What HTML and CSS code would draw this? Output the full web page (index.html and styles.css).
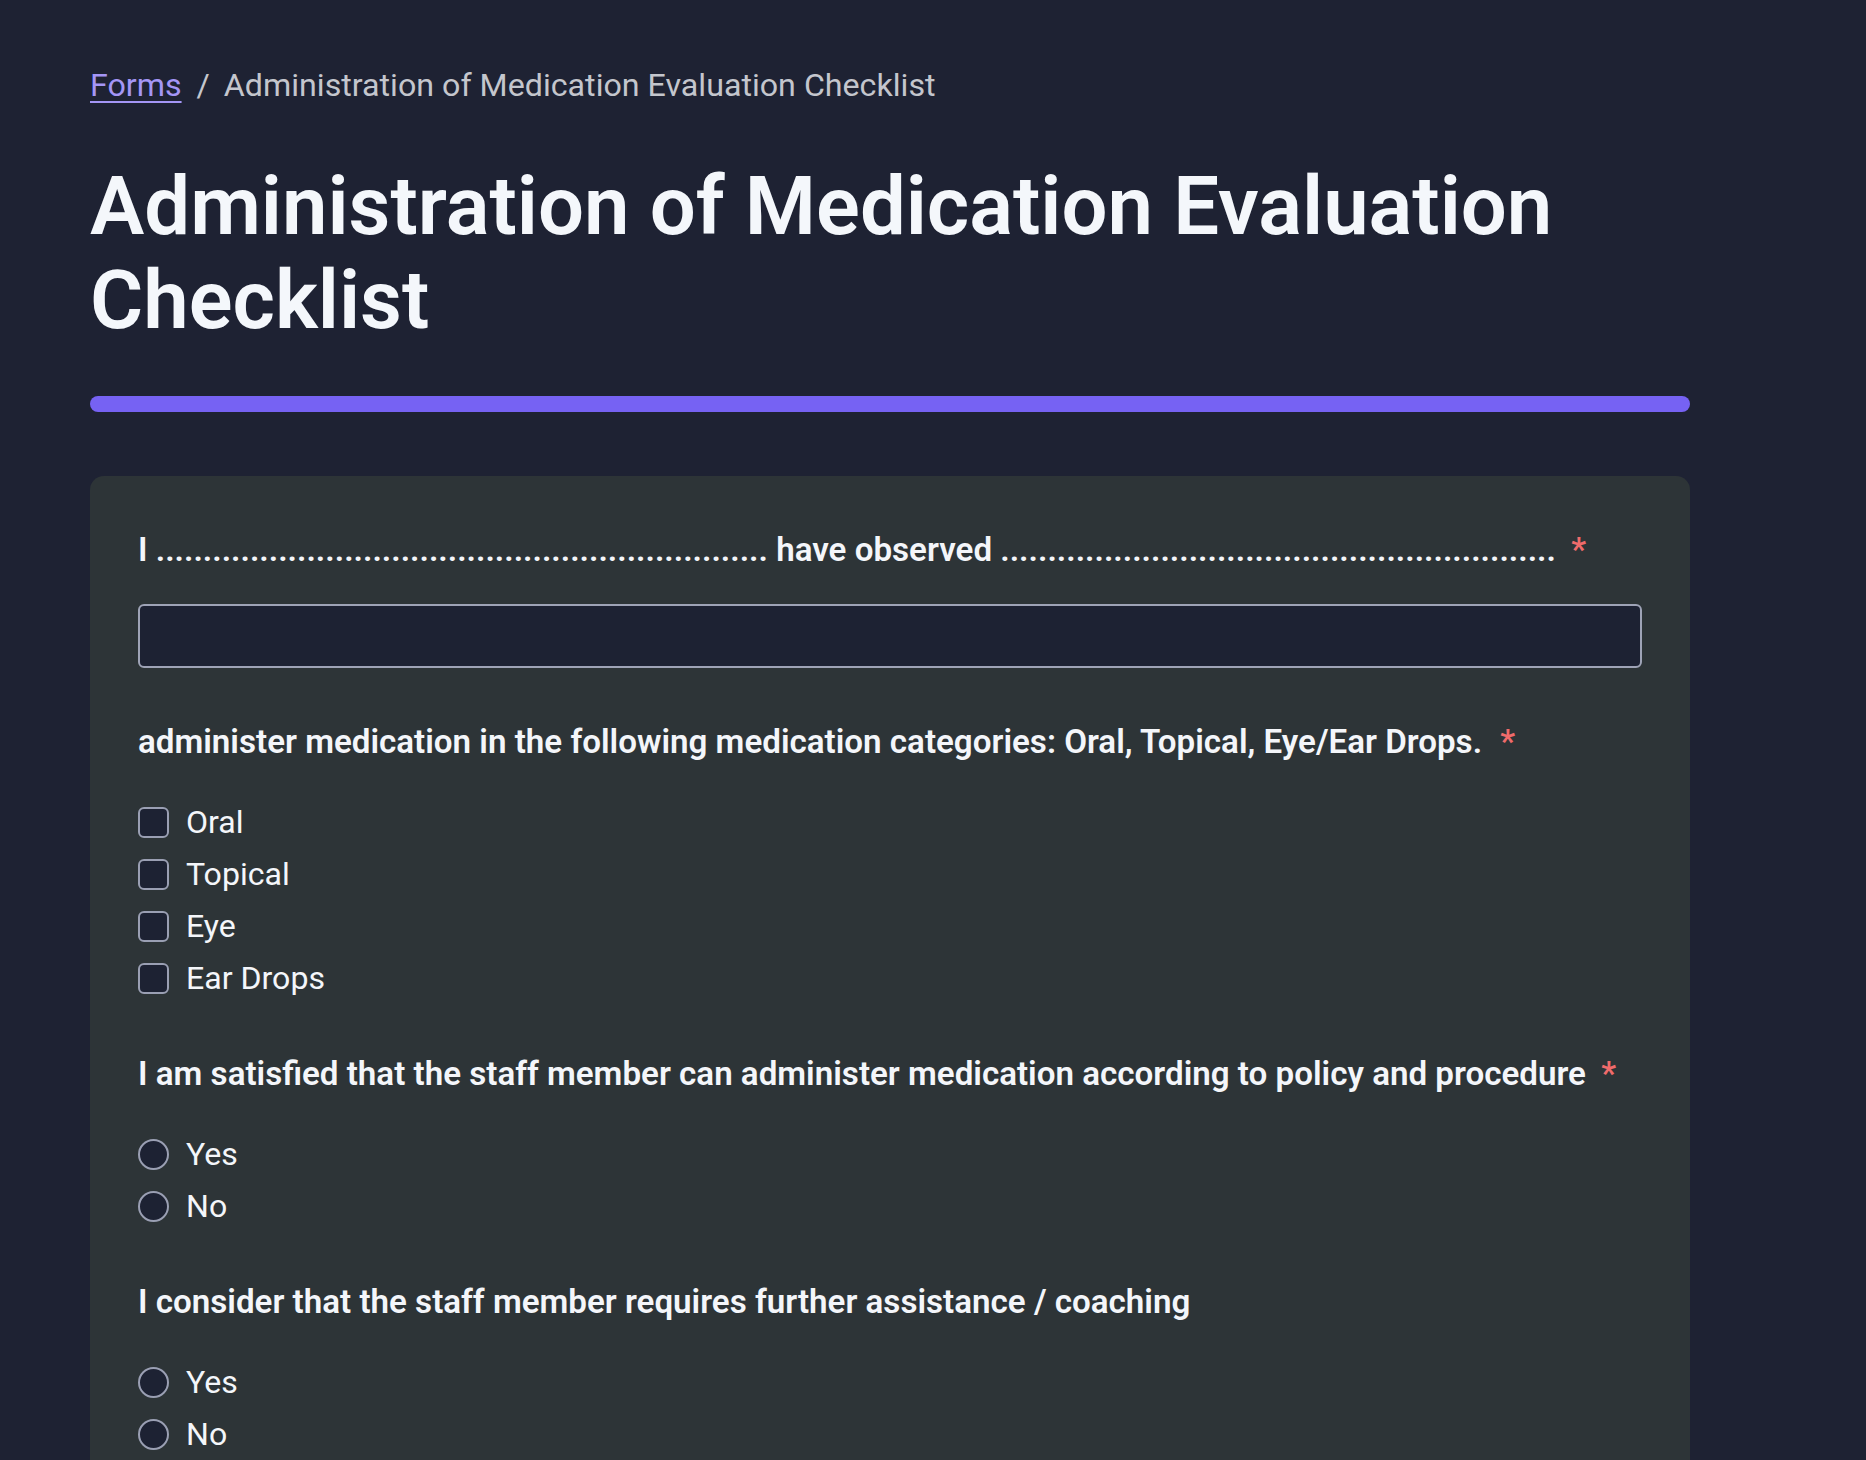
FILE: index.html
```html
<!DOCTYPE html>
<html lang="en">
<head>
<meta charset="utf-8">
<title>Administration of Medication Evaluation Checklist</title>
<link rel="stylesheet" href="styles.css">
</head>
<body>
<main class="page">
  <nav class="breadcrumb"><a href="#" class="crumb-link">Forms</a><span class="crumb-sep">/</span><span class="crumb-current">Administration of Medication Evaluation Checklist</span></nav>
  <h1 class="title">Administration of Medication Evaluation Checklist</h1>
  <div class="progress"></div>
  <form class="card">
    <div class="field">
      <label class="label">I ................................................................. have observed ........................................................... <span class="req">*</span></label>
      <input class="text-input" type="text">
    </div>
    <div class="field">
      <div class="label">administer medication in the following medication categories: Oral, Topical, Eye/Ear Drops. <span class="req req-wide">*</span></div>
      <div class="options">
        <label class="option"><input type="checkbox" class="check"><span>Oral</span></label>
        <label class="option"><input type="checkbox" class="check"><span>Topical</span></label>
        <label class="option"><input type="checkbox" class="check"><span>Eye</span></label>
        <label class="option"><input type="checkbox" class="check"><span>Ear Drops</span></label>
      </div>
    </div>
    <div class="field">
      <div class="label">I am satisfied that the staff member can administer medication according to policy and procedure <span class="req">*</span></div>
      <div class="options">
        <label class="option"><input type="radio" name="q3" class="radio"><span>Yes</span></label>
        <label class="option"><input type="radio" name="q3" class="radio"><span>No</span></label>
      </div>
    </div>
    <div class="field">
      <div class="label">I consider that the staff member requires further assistance / coaching</div>
      <div class="options">
        <label class="option"><input type="radio" name="q4" class="radio"><span>Yes</span></label>
        <label class="option"><input type="radio" name="q4" class="radio"><span>No</span></label>
      </div>
    </div>
  </form>
</main>
</body>
</html>
```
FILE: styles.css
```css
html, body {
  margin: 0;
  padding: 0;
  background: #1e2233;
}
body {
  font-family: Roboto, "Liberation Sans", sans-serif;
  color: #f4f6fa;
}
.page {
  padding: 61px 0 60px 90px;
  width: 1600px;
}
.breadcrumb {
  font-size: 32.2px;
  line-height: 48px;
  color: #c4c6cd;
  display: flex;
  white-space: nowrap;
}
.crumb-link {
  color: #a496f6;
  text-decoration: underline;
  text-underline-offset: 5px;
  text-decoration-thickness: 2px;
}
.crumb-sep {
  margin: 0 14px 0 15px;
}
.title {
  margin: 50px 0 0;
  font-size: 81.4px;
  line-height: 94px;
  font-weight: 600;
  color: #f4f7fb;
}
.progress {
  margin-top: 49px;
  height: 16px;
  border-radius: 8px;
  background: #7662f3;
}
.card {
  margin-top: 64px;
  background: #2d3437;
  border-radius: 14px;
  padding: 50px 48px 60px;
  display: flex;
  flex-direction: column;
  gap: 50px;
}
.field {
  display: flex;
  flex-direction: column;
}
.label {
  font-size: 33.15px;
  line-height: 48px;
  font-weight: 600;
  color: #f4f6fa;
  white-space: nowrap;
}
.req {
  color: #ef6b6b;
  margin-left: 7px;
}
.req-wide {
  margin-left: 10px;
}
.text-input {
  margin-top: 30px;
  height: 64px;
  box-sizing: border-box;
  border: 2px solid #9ea3b6;
  border-radius: 6px;
  background: #1d2233;
  color: #f4f6fa;
  font: inherit;
  font-size: 30px;
  padding: 0 16px;
  outline: none;
}
.options {
  margin-top: 34px;
  display: flex;
  flex-direction: column;
  gap: 8px;
}
.option {
  display: flex;
  align-items: center;
  height: 44px;
  gap: 17px;
  font-size: 32.1px;
  line-height: 44px;
  color: #f4f6fa;
}
.check, .radio {
  appearance: none;
  -webkit-appearance: none;
  margin: 0;
  width: 31px;
  height: 31px;
  box-sizing: border-box;
  border: 2px solid #9a9fb3;
  background: #1d2233;
  flex: none;
}
.check {
  border-radius: 6px;
}
.radio {
  border-radius: 50%;
}
```
